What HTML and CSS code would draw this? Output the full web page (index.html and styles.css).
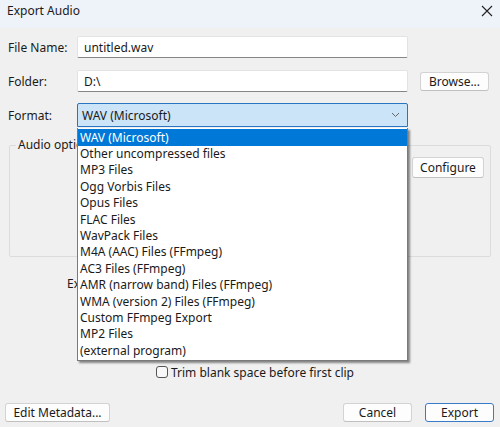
FILE: index.html
```html
<!DOCTYPE html>
<html>
<head>
<meta charset="utf-8">
<link rel="stylesheet" href="styles.css">
</head>
<body>
<div class="window">
  <div class="titlebar">
    <span class="title">Export Audio</span>
    <svg class="close" width="12" height="12" viewBox="0 0 12 12"><path d="M1 1L11 11M11 1L1 11" stroke="#222" stroke-width="1.1" fill="none"/></svg>
  </div>
  <div class="body">
    <div class="row r1">
      <span class="label">File Name:</span>
      <div class="input">untitled.wav</div>
    </div>
    <div class="row r2">
      <span class="label">Folder:</span>
      <div class="input">D:\</div>
      <div class="btn browse">Browse...</div>
    </div>
    <div class="row r3">
      <span class="label">Format:</span>
      <div class="select">
        <span>WAV (Microsoft)</span>
        <svg class="chev" width="9" height="6" viewBox="0 0 9 6"><path d="M1 1L4.5 4.5L8 1" stroke="#666" stroke-width="1" fill="none"/></svg>
      </div>
    </div>
    <div class="group">
      <span class="legend">Audio options</span>
      <div class="btn configure">Configure</div>
    </div>
    <div class="range">Export Range:</div>
    <div class="trim">
      <span class="check"></span>
      <span>Trim blank space before first clip</span>
    </div>
    <div class="footer">
      <div class="btn meta">Edit Metadata...</div>
      <div class="spacer"></div>
      <div class="btn cancel">Cancel</div>
      <div class="btn export">Export</div>
    </div>
  </div>
  <ul class="dropdown">
    <li class="sel">WAV (Microsoft)</li>
    <li>Other uncompressed files</li>
    <li>MP3 Files</li>
    <li>Ogg Vorbis Files</li>
    <li>Opus Files</li>
    <li>FLAC Files</li>
    <li>WavPack Files</li>
    <li>M4A (AAC) Files (FFmpeg)</li>
    <li>AC3 Files (FFmpeg)</li>
    <li>AMR (narrow band) Files (FFmpeg)</li>
    <li>WMA (version 2) Files (FFmpeg)</li>
    <li>Custom FFmpeg Export</li>
    <li>MP2 Files</li>
    <li>(external program)</li>
  </ul>
</div>
</body>
</html>
```
FILE: styles.css
```css
* { box-sizing: border-box; }
html, body { margin: 0; padding: 0; }
body {
  width: 500px;
  height: 427px;
  overflow: hidden;
  background: #f0f0f0;
  font-family: "Noto Sans", "Open Sans", sans-serif;
  font-size: 12px;
  color: #1a1a1a;
}
.window { position: relative; width: 500px; height: 427px; }
.titlebar {
  height: 28px;
  background: #eef2f9;
  display: flex;
  align-items: center;
  justify-content: space-between;
  padding: 0 7px 7px 7px;
}
.title { font-size: 12px; color: #1a1a1a; }
.body { padding: 8px 0 0 0; }
.row { display: flex; align-items: center; height: 22px; }
.label { width: 77px; padding-left: 8px; }
.input {
  width: 331px;
  height: 22px;
  background: #fff;
  border: 1px solid #e3e3e3;
  border-bottom: 1px solid #868686;
  border-radius: 2px;
  padding: 0 6px;
  display: flex;
  align-items: center;
}
.r2 { margin-top: 12px; }
.r3 { margin-top: 11px; height: 24px; }
.btn {
  background: #fdfdfd;
  border: 1px solid #d3d3d3;
  border-bottom-color: #c0c0c0;
  border-radius: 3px;
  display: flex;
  align-items: center;
  justify-content: center;
  height: 19px;
}
.browse { width: 69px; margin-left: 12px; }
.select {
  width: 331px;
  height: 24px;
  background: #cce4f7;
  border: 1px solid #2a74c0;
  border-radius: 2px 2px 0 0;
  display: flex;
  align-items: center;
  justify-content: space-between;
  padding: 0 6px 0 4px;
}
.chev { margin-right: 1px; }
.group {
  position: relative;
  margin: 18px 9px 0 9px;
  height: 112px;
  border: 1px solid #dcdcdc;
  border-radius: 2px;
}
.legend {
  position: absolute;
  top: -10px;
  left: 6px;
  padding: 0 2px;
  background: #f0f0f0;
}
.configure {
  position: absolute;
  top: 11px;
  left: 402px;
  width: 72px;
  height: 21px;
}
.range { margin: 18px 0 0 67px; height: 18px; }
.trim {
  display: flex;
  align-items: center;
  margin: 71px 0 0 156px;
  height: 16px;
  gap: 3px;
}
.check {
  width: 12px;
  height: 12px;
  border: 1px solid #555;
  border-radius: 3px;
  background: #f8f8f8;
}
.footer {
  display: flex;
  align-items: center;
  margin-top: 23px;
  padding: 0 6px 0 5px;
}
.spacer { flex: 1; }
.meta { width: 105px; }
.cancel { width: 69px; }
.export {
  width: 69px;
  margin-left: 13px;
  border: 1px solid #3a7bc8;
  border-radius: 3px;
}
.dropdown {
  position: absolute;
  left: 77px;
  top: 128px;
  width: 331px;
  margin: 0;
  padding: 1px 0 1px 0;
  list-style: none;
  background: #fff;
  border: 1px solid #7a7a7a;
  border-top: none;
  box-shadow: 2px 2px 2px rgba(0,0,0,0.45);
}
.dropdown li {
  height: 16.4px;
  line-height: 16.4px;
  padding-left: 2px;
  white-space: nowrap;
}
.dropdown li.sel { background: #0078d7; color: #fff; height: 17px; line-height: 17px; }
```
